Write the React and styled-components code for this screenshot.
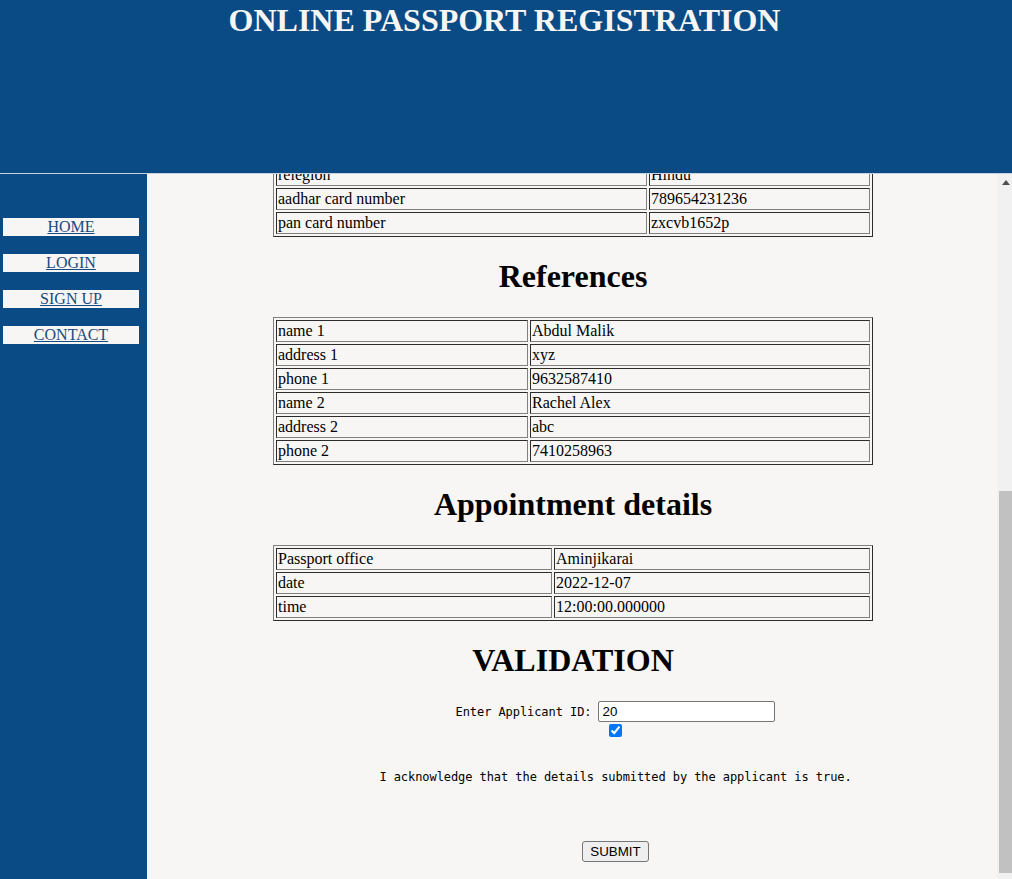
import React, { useLayoutEffect, useRef } from 'react';
import styled, { createGlobalStyle } from 'styled-components';

const Global = createGlobalStyle`
  html, body {
    margin: 0;
    padding: 0;
    height: 100%;
    overflow: hidden;
  }
  body {
    font-family: "Liberation Serif", "Times New Roman", serif;
    background: #f7f6f4;
    color: #000;
  }
`;

const BLUE = '#0a4a85';

const Page = styled.div`
  display: flex;
  flex-direction: column;
  height: 100vh;
  width: calc(100vw + 2px);
`;

const Header = styled.header`
  flex: none;
  height: 173px;
  background: ${BLUE};
  border-bottom: 1px solid #c9d1da;
  text-align: center;
  padding-right: 5px;
`;

const Title = styled.h1`
  margin: 0;
  padding-top: 2px;
  color: #f7f6f4;
  font-size: 32px;
  font-weight: bold;
`;

const Body = styled.div`
  flex: none;
  display: flex;
  height: 716px;
`;

const Sidebar = styled.nav`
  flex: none;
  width: 147px;
  background: ${BLUE};
  padding-top: 44px;
  box-sizing: border-box;
  display: flex;
  flex-direction: column;
  gap: 18px;
`;

const NavLink = styled.a`
  display: block;
  margin-left: 3px;
  width: 136px;
  height: 18px;
  line-height: 18px;
  background: #f7f6f4;
  color: #174a80;
  font-size: 16px;
  text-align: center;
  text-decoration: underline;
`;

const Main = styled.main`
  flex: 1;
  min-width: 0;
  overflow-y: scroll;
  scrollbar-width: none;
  background: #f7f6f4;
  padding: 14px 0 28px 2px;
  box-sizing: border-box;
  &::-webkit-scrollbar {
    display: none;
  }
`;

const ScrollTrack = styled.div`
  flex: none;
  width: 17px;
  background: #f1f1f1;
  display: flex;
  flex-direction: column;
`;

const ScrollButton = styled.div`
  flex: none;
  height: 17px;
  display: flex;
  align-items: center;
  justify-content: center;
`;

const ScrollThumb = styled.div`
  flex: none;
  margin: 300px 2px 0;
  height: 382px;
  background: #c1c1c1;
`;

const Heading = styled.h1`
  margin: 0.67em 0;
  font-size: 32px;
  font-weight: bold;
  text-align: center;
`;

const Table = styled.table`
  width: 600px;
  margin: 0 auto;
  table-layout: fixed;
  border-collapse: separate;
  border-spacing: 2px;
  border: 1px solid;
  border-color: #808080 #2c2c2c #2c2c2c #808080;
`;

const Cell = styled.td`
  box-sizing: border-box;
  padding: 1px;
  font-size: 16px;
  line-height: 18px;
  border: 1px solid;
  border-color: #2c2c2c #808080 #808080 #2c2c2c;
  ${(p) => (p.$width ? `width: ${p.$width}px;` : '')}
`;

const Form = styled.form`
  margin-left: 85px;
  display: flex;
  flex-direction: column;
  align-items: center;
`;

const IdRow = styled.div`
  display: flex;
  align-items: baseline;
  gap: 7px;
`;

const Mono = styled.span`
  font-family: "DejaVu Sans Mono", "Liberation Mono", monospace;
  font-size: 12px;
  letter-spacing: -0.07px;
  white-space: pre;
`;

const Input = styled.input`
  box-sizing: border-box;
  width: 177px;
  height: 21px;
  padding: 1px 3px;
  border: 1px solid #767676;
  border-radius: 2px;
  background: #fff;
  font-family: "Liberation Sans", Arial, sans-serif;
  font-size: 13.33px;
  color: #000;
`;

const Check = styled.input`
  width: 13px;
  height: 13px;
  margin: 2px 0 0;
`;

const Ack = styled(Mono)`
  display: block;
  margin-top: 33px;
`;

const Submit = styled.button`
  margin-top: 57px;
  height: 21px;
  padding: 1px 7px;
  border: 1px solid #767676;
  border-radius: 3px;
  background: #efefef;
  color: #000;
  font-family: "Liberation Sans", Arial, sans-serif;
  font-size: 13.33px;
`;

const personal = [
  ['full name', 'Anjali Nair'],
  ['given name', 'Anjali'],
  ['surname', 'Nair'],
  ['gender', 'female'],
  ['date of birth', '1998-04-16'],
  ['place of birth', 'Trivandrum'],
  ['marital status', 'single'],
  ['father name', 'Suresh Nair'],
  ['mother name', 'Lekha Nair'],
  ['spouse name', '-'],
  ['address', 'abc street'],
  ['city', 'Trivandrum'],
  ['state', 'Kerala'],
  ['pincode', '695001'],
  ['phone number', '9876543210'],
  ['email', 'anjali@gmail.com'],
  ['education', 'graduate'],
  ['employment', 'private'],
  ['nationality', 'Indian'],
  ['relegion', 'Hindu'],
  ['aadhar card number', '789654231236'],
  ['pan card number', 'zxcvb1652p'],
];

const references = [
  ['name 1', 'Abdul Malik'],
  ['address 1', 'xyz'],
  ['phone 1', '9632587410'],
  ['name 2', 'Rachel Alex'],
  ['address 2', 'abc'],
  ['phone 2', '7410258963'],
];

const appointment = [
  ['Passport office', 'Aminjikarai'],
  ['date', '2022-12-07'],
  ['time', '12:00:00.000000'],
];

function DataTable({ rows, labelWidth }) {
  return (
    <Table>
      <tbody>
        {rows.map(([k, v], i) => (
          <tr key={k}>
            <Cell $width={i === 0 ? labelWidth : undefined}>{k}</Cell>
            <Cell>{v}</Cell>
          </tr>
        ))}
      </tbody>
    </Table>
  );
}

function UpArrow() {
  return (
    <svg width="8" height="5" viewBox="0 0 8 5" aria-hidden="true">
      <polygon points="4,0 8,5 0,5" fill="#505050" />
    </svg>
  );
}

export default function App() {
  const mainRef = useRef(null);
  useLayoutEffect(() => {
    const el = mainRef.current;
    if (el) el.scrollTop = el.scrollHeight;
  }, []);

  return (
    <Page>
      <Global />
      <Header>
        <Title>ONLINE PASSPORT REGISTRATION</Title>
      </Header>
      <Body>
        <Sidebar>
          <NavLink href="#">HOME</NavLink>
          <NavLink href="#">LOGIN</NavLink>
          <NavLink href="#">SIGN UP</NavLink>
          <NavLink href="#">CONTACT</NavLink>
        </Sidebar>
        <Main ref={mainRef}>
          <Heading>Personal details</Heading>
          <DataTable rows={personal} labelWidth={371} />
          <Heading>References</Heading>
          <DataTable rows={references} labelWidth={252} />
          <Heading>Appointment details</Heading>
          <DataTable rows={appointment} labelWidth={276} />
          <Heading>VALIDATION</Heading>
          <Form onSubmit={(e) => e.preventDefault()}>
            <IdRow>
              <Mono>Enter Applicant ID:</Mono>
              <Input type="text" defaultValue="20" />
            </IdRow>
            <Check type="checkbox" defaultChecked />
            <Ack>I acknowledge that the details submitted by the applicant is true.</Ack>
            <Submit type="submit">SUBMIT</Submit>
          </Form>
        </Main>
        <ScrollTrack>
          <ScrollButton>
            <UpArrow />
          </ScrollButton>
          <ScrollThumb />
        </ScrollTrack>
      </Body>
    </Page>
  );
}
